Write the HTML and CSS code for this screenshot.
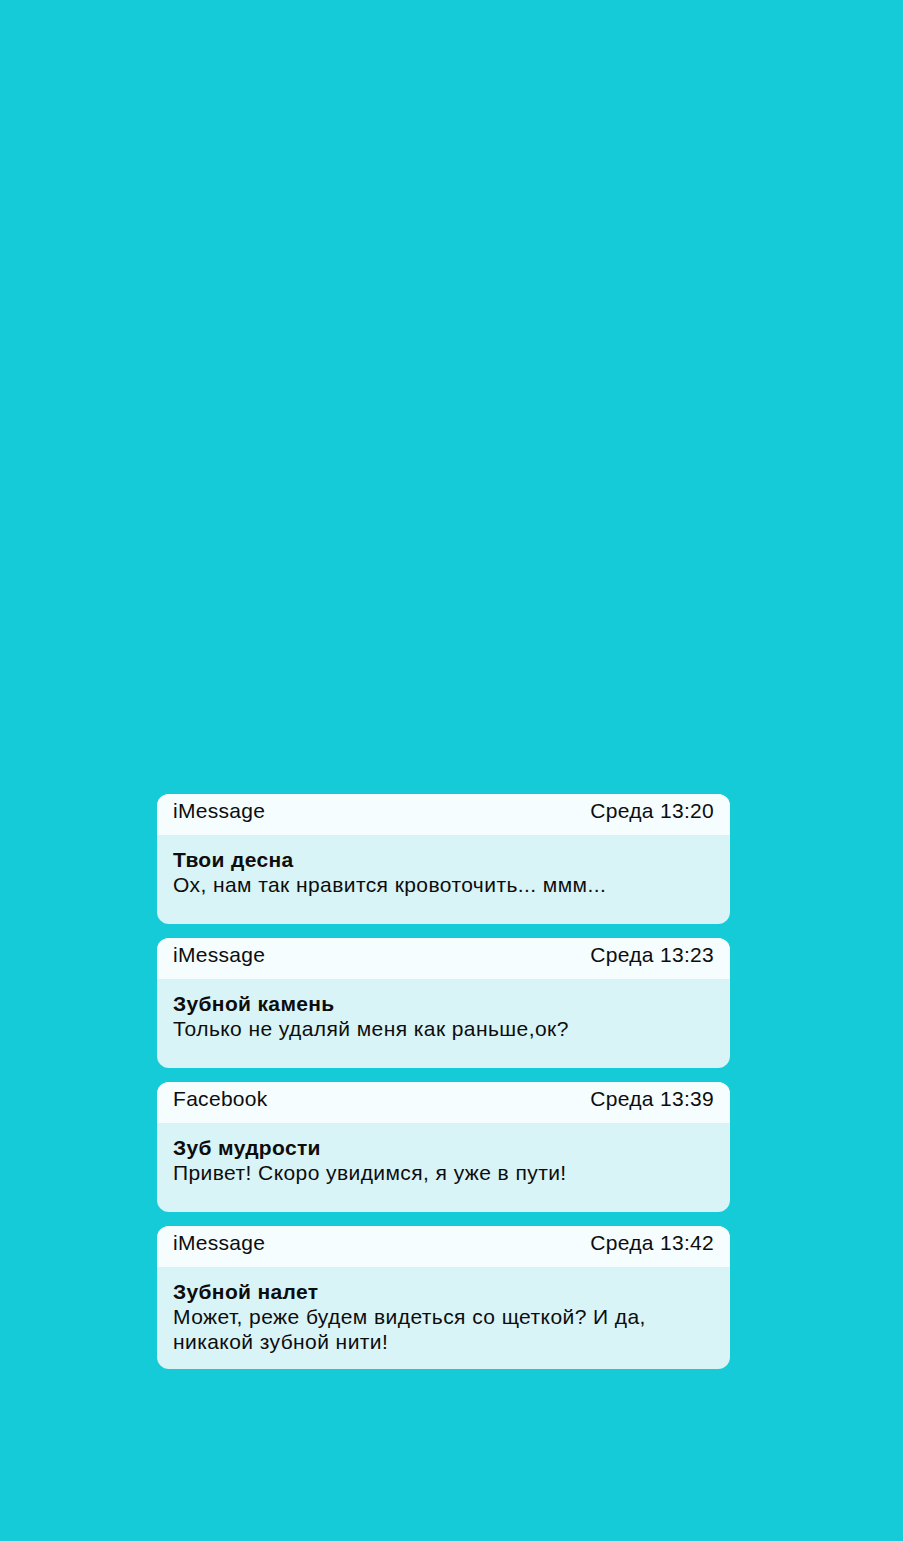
FILE: index.html
```html
<!DOCTYPE html>
<html lang="ru">
<head>
<meta charset="utf-8">
<title>Уведомления</title>
<link rel="stylesheet" href="styles.css">
</head>
<body>
<main class="screen">
  <section class="stack">
    <article class="note">
      <header class="note-head"><span class="app">iMessage</span><span class="time">Среда 13:20</span></header>
      <div class="note-body">
        <div class="title">Твои десна</div>
        <div class="text">Ох, нам так нравится кровоточить... ммм...</div>
      </div>
    </article>
    <article class="note">
      <header class="note-head"><span class="app">iMessage</span><span class="time">Среда 13:23</span></header>
      <div class="note-body">
        <div class="title">Зубной камень</div>
        <div class="text">Только не удаляй меня как раньше,ок?</div>
      </div>
    </article>
    <article class="note">
      <header class="note-head"><span class="app">Facebook</span><span class="time">Среда 13:39</span></header>
      <div class="note-body">
        <div class="title">Зуб мудрости</div>
        <div class="text">Привет! Скоро увидимся, я уже в пути!</div>
      </div>
    </article>
    <article class="note">
      <header class="note-head"><span class="app">iMessage</span><span class="time">Среда 13:42</span></header>
      <div class="note-body">
        <div class="title">Зубной налет</div>
        <div class="text">Может, реже будем видеться со щеткой? И да,<br>никакой зубной нити!</div>
      </div>
    </article>
  </section>
</main>
</body>
</html>
```

FILE: styles.css
```css
html, body {
  margin: 0;
  padding: 0;
  background: #14cbd7;
}
body {
  width: 903px;
  height: 1541px;
  overflow: hidden;
  font-family: "Liberation Sans", Arial, sans-serif;
  color: #0d0d0d;
}
.screen {
  padding-top: 794px;
  padding-left: 157px;
}
.stack {
  width: 573px;
  display: flex;
  flex-direction: column;
  gap: 14px;
}
.note {
  min-height: 130px;
  border-radius: 12px;
  overflow: hidden;
  background: #d9f4f7;
  display: flex;
  flex-direction: column;
}
.note-head {
  height: 41px;
  box-sizing: border-box;
  padding: 4px 16px 0 16px;
  background: #f5fdfe;
  display: flex;
  justify-content: space-between;
  font-size: 21px;
  letter-spacing: 0.3px;
  line-height: 26px;
}
.note-body {
  padding: 12px 16px 15px 16px;
  font-size: 21px;
  letter-spacing: 0.42px;
  line-height: 25px;
}
.title {
  font-weight: bold;
  letter-spacing: 0.35px;
}
```
